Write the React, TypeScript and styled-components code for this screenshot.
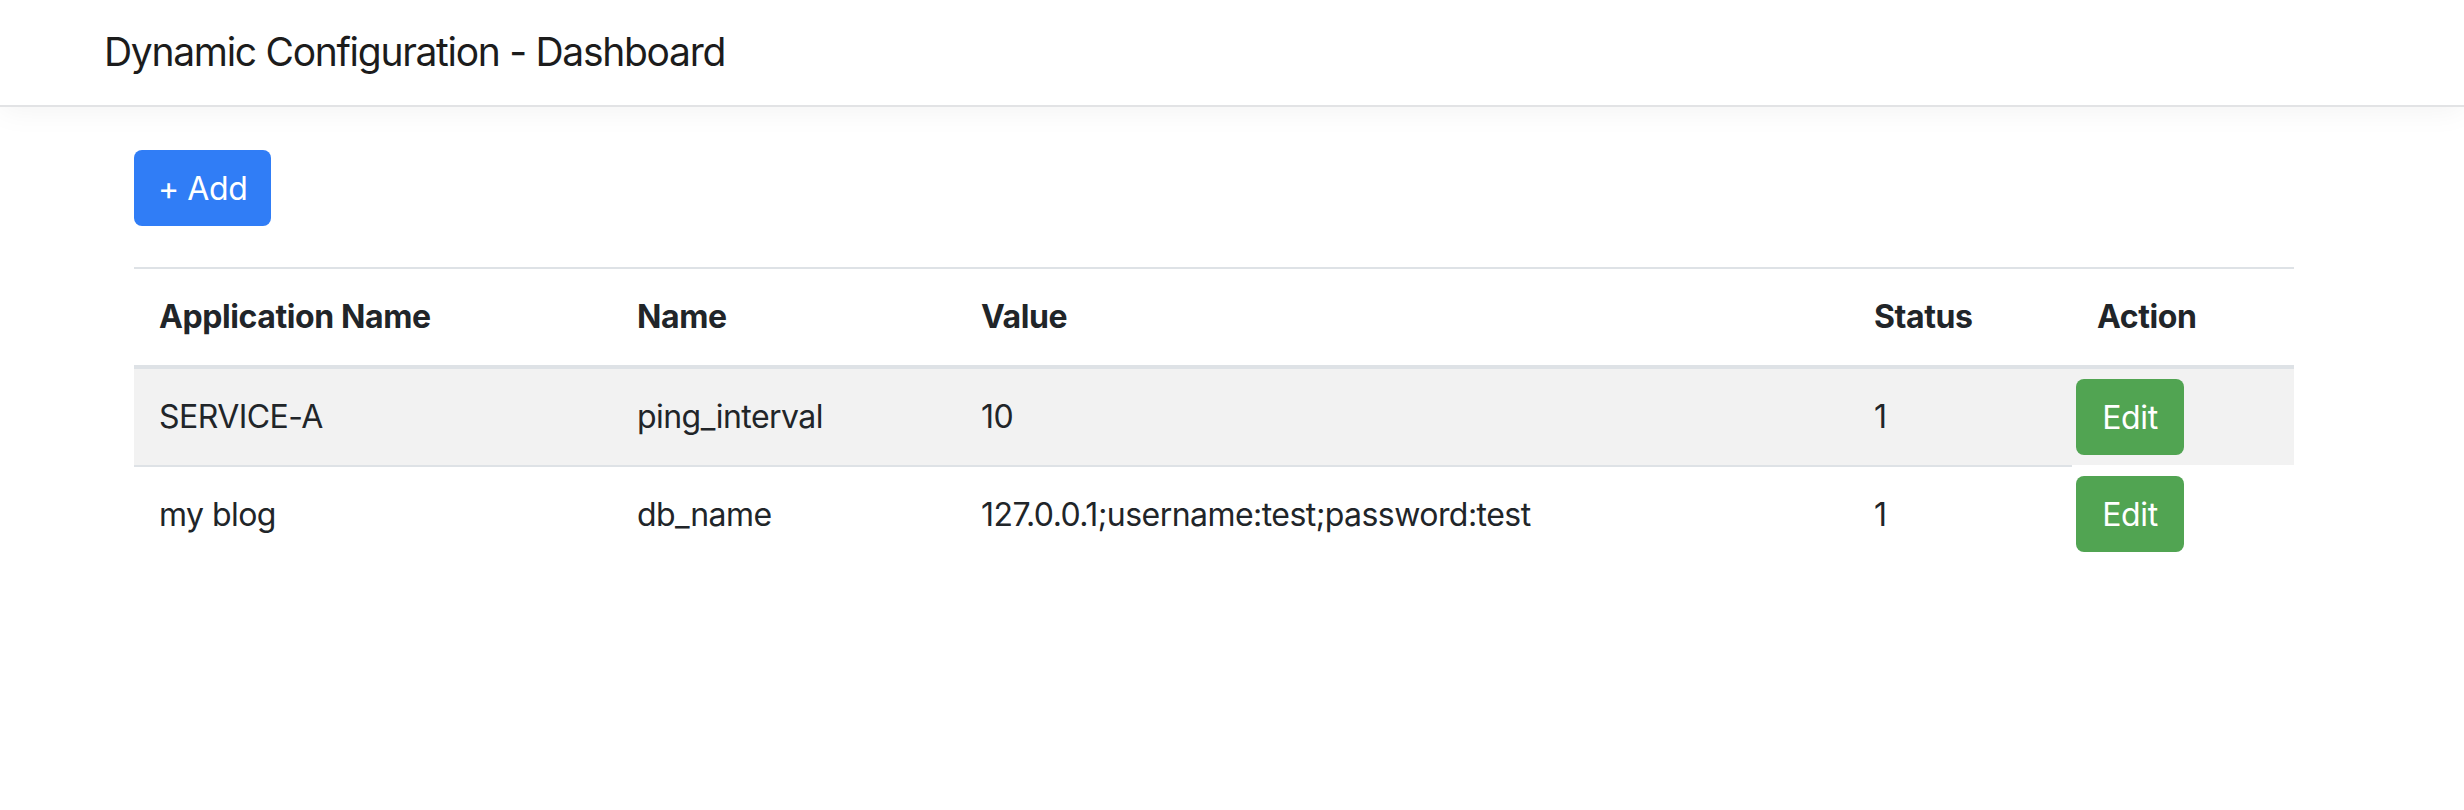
import React from 'react'
import styled, { createGlobalStyle } from 'styled-components'

const GlobalStyle = createGlobalStyle`
  html, body {
    margin: 0;
    padding: 0;
    background: #fff;
  }

  body {
    font-family: Inter, "Liberation Sans", sans-serif;
    color: #212529;
    -webkit-font-smoothing: antialiased;
  }
`

const CONFIGS = [
  { id: 1, application: 'SERVICE-A', name: 'ping_interval', value: '10', status: 1 },
  { id: 2, application: 'my blog', name: 'db_name', value: '127.0.0.1;username:test;password:test', status: 1 },
]

const COLUMNS = [
  { key: 'application', text: 'Application Name', width: 478 },
  { key: 'name', text: 'Name', width: 344 },
  { key: 'value', text: 'Value', width: 893 },
  { key: 'status', text: 'Status', width: 223 },
  { key: 'action', text: 'Action', width: 222 },
]

const App = () => {
  return (
    <>
      <GlobalStyle />
      <Navbar>
        <Brand>Dynamic Configuration - Dashboard</Brand>
      </Navbar>

      <Main>
        <AddButton type="button">+ Add</AddButton>

        <ConfigTable>
          <colgroup>
            {COLUMNS.map(col => (
              <Col key={col.key} $width={col.width} />
            ))}
          </colgroup>
          <thead>
            <tr>
              {COLUMNS.map(col => (
                <HeadCell key={col.key}>{col.text}</HeadCell>
              ))}
            </tr>
          </thead>
          <tbody>
            {CONFIGS.map((config, index) => (
              <Row key={config.id} $striped={index % 2 === 0}>
                <Cell $first={index === 0}>{config.application}</Cell>
                <Cell $first={index === 0}>{config.name}</Cell>
                <Cell $first={index === 0}>{config.value}</Cell>
                <Cell $first={index === 0}>{config.status}</Cell>
                <ActionCell>
                  <EditButton type="button">Edit</EditButton>
                </ActionCell>
              </Row>
            ))}
          </tbody>
        </ConfigTable>
      </Main>
    </>
  )
}

export default App

const Navbar = styled.nav`
  display: flex;
  align-items: center;
  height: 105px;
  padding-left: 104px;
  border-bottom: 2px solid #e2e3e5;
  box-shadow: 0 4px 28px rgba(0, 0, 0, 0.05);
  position: relative;
  z-index: 1;
  background: #fff;
`

const Brand = styled.span`
  font-size: 39px;
  font-weight: 400;
  color: #1c1c1c;
  letter-spacing: -1.3px;
  margin-top: -2px;
`

const Main = styled.main`
  width: 2160px;
  margin-left: 134px;
  padding-top: 43px;
`

const AddButton = styled.button`
  display: block;
  height: 76px;
  padding: 0 24px;
  border: none;
  border-radius: 8px;
  background: #307df6;
  color: #fff;
  font-family: inherit;
  font-size: 32px;
  letter-spacing: -0.4px;
  cursor: pointer;
`

const ConfigTable = styled.table`
  width: 2160px;
  margin-top: 41px;
  table-layout: fixed;
  border-collapse: separate;
  border-spacing: 0;
  border-top: 2px solid #dee2e6;
  font-size: 32px;
  line-height: 48px;
`

const Col = styled.col<{ $width: number }>`
  width: ${p => p.$width}px;
`

const HeadCell = styled.th`
  padding: 24px 25px;
  text-align: left;
  font-weight: 700;
  letter-spacing: -0.4px;
  border-bottom: 4px solid #dee2e6;
`

const Row = styled.tr<{ $striped: boolean }>`
  background: ${p => (p.$striped ? '#f2f2f2' : 'transparent')};
`

const Cell = styled.td<{ $first: boolean }>`
  padding: 24px 25px;
  border-top: ${p => (p.$first ? 'none' : '2px solid #dee2e6')};
  letter-spacing: -0.55px;
  white-space: nowrap;
`

const ActionCell = styled.td`
  padding: 10px 4px;
`

const EditButton = styled.button`
  display: block;
  height: 76px;
  width: 108px;
  border: none;
  border-radius: 8px;
  background: #51a452;
  color: #fff;
  font-family: inherit;
  font-size: 32px;
  letter-spacing: -0.4px;
  cursor: pointer;
`
